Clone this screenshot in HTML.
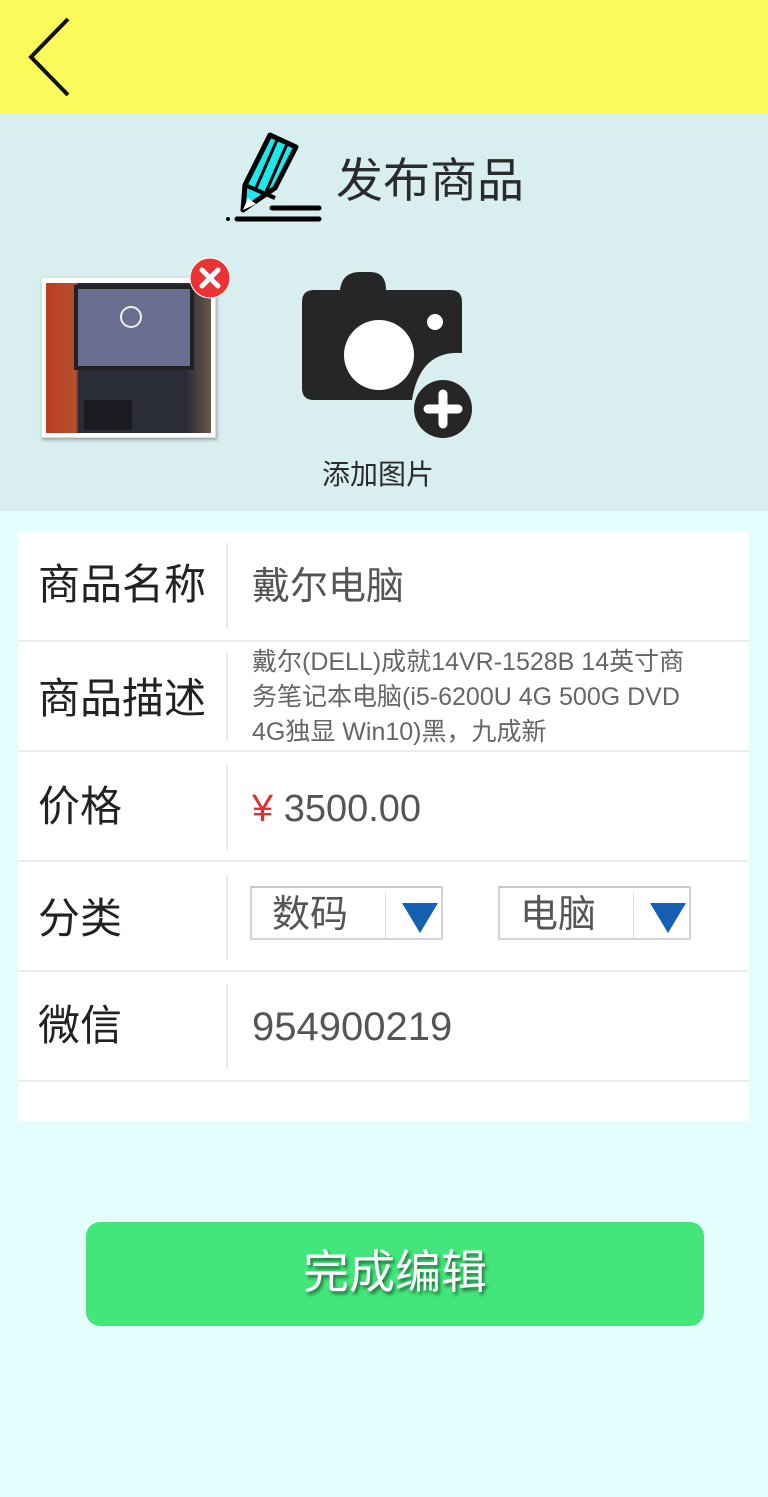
<!DOCTYPE html>
<html><head><meta charset="utf-8"><style>
*{margin:0;padding:0;box-sizing:border-box}
body{width:768px;height:1497px;background:#e4fefe;font-family:"Liberation Sans","Noto Sans CJK SC",sans-serif;position:relative;overflow:hidden}
.top{position:absolute;left:0;top:0;width:768px;height:114px;background:#fafa5a}
.hdr{position:absolute;left:0;top:114px;width:768px;height:397px;background:#d9eeef}
.title{position:absolute;left:336px;top:151px;font-size:47px;color:#2b2b2b;line-height:60px}
.addt{position:absolute;left:322px;top:453px;font-size:28px;color:#2b2b2b}
.form{position:absolute;left:18px;top:531px;width:731px;height:590px;background:#fff}
.row{position:absolute;left:0;width:731px;border-bottom:2px solid #ececec}
.lab{position:absolute;left:20px;font-size:42px;color:#222;line-height:48px}
.sep{position:absolute;left:208px;width:2px;background:#ececec}
.val{position:absolute;left:234px;font-size:38px;color:#555;line-height:44px}
.sel{position:absolute;top:886px;width:193px;height:54px;border:2px solid #d4d4d4;border-top-color:#c8c8c8;background:#fff}
.sel span{position:absolute;left:20px;top:3px;font-size:38px;color:#555;line-height:48px}
.sel i{position:absolute;left:133px;top:4px;width:1px;height:46px;background:#ddd}
.sel b{position:absolute;left:150px;top:15px;width:0;height:0;border-left:18px solid transparent;border-right:18px solid transparent;border-top:30px solid #1560b0}
.btn{position:absolute;left:86px;top:1222px;width:618px;height:104px;background:#42e67a;border-radius:14px;color:#fff;font-size:46px;text-align:center;line-height:100px;text-shadow:2px 3px 3px rgba(0,0,0,.5)}
</style></head><body>
<div class="top"></div>
<svg style="position:absolute;left:26px;top:16px" width="46" height="82"><path d="M42 3 L5 41 L42 79" stroke="#111" stroke-width="4" fill="none"/></svg>
<div class="hdr"></div>
<svg style="position:absolute;left:224px;top:132px" width="100" height="95">
<path d="M46 3 L72 15 L51 56 L19 78 L21 53 Z" fill="#1de8ec" stroke="#000" stroke-width="5" stroke-linejoin="round"/>
<path d="M21 53 L51 66 M21 53 L19 78" stroke="#000" stroke-width="4"/>
<path d="M53 8 L32 56 M63 12 L42 60" stroke="#000" stroke-width="3"/>
<path d="M24 66 L19 78 L32 72 Z" fill="#fff"/>
<path d="M48 76 L95 76 M13 87 L95 87" stroke="#000" stroke-width="5" stroke-linecap="round"/>
<circle cx="4" cy="87" r="2" fill="#000"/></svg>
<div class="title">发布商品</div>
<div style="position:absolute;left:41px;top:277px;width:175px;height:161px;background:#fff;box-shadow:1px 2px 3px rgba(0,0,0,.3);border:1px solid #ddd"></div>
<div style="position:absolute;left:46px;top:283px;width:165px;height:150px;background:linear-gradient(90deg,#c03a20 0%,#b45030 18%,#2a2c38 20%,#2a2c38 85%,#6a5a48 100%)"></div>
<div style="position:absolute;left:74px;top:285px;width:120px;height:85px;background:#6a6e90;border:4px solid #222"></div>
<div style="position:absolute;left:120px;top:306px;width:22px;height:22px;border-radius:50%;border:2px solid #eee"></div>
<div style="position:absolute;left:84px;top:400px;width:48px;height:30px;background:#1a1a20"></div>
<svg style="position:absolute;left:188px;top:256px" width="44" height="44"><circle cx="22" cy="22" r="20" fill="#ea3434" stroke="#fff" stroke-width="1"/><path d="M14 14 L30 30 M30 14 L14 30" stroke="#fff" stroke-width="5" stroke-linecap="round"/></svg>
<svg style="position:absolute;left:300px;top:270px" width="176" height="170">
<path d="M14 20 H40 Q42 2 60 2 H70 Q86 2 86 20 H150 Q162 20 162 32 V83 Q120 80 112 130 H14 Q2 130 2 118 V32 Q2 20 14 20 Z" fill="#262626"/>
<circle cx="79" cy="85" r="35" fill="#fff"/><circle cx="135" cy="52" r="8" fill="#fff"/>
<circle cx="143" cy="139" r="29" fill="#262626"/>
<path d="M143 124 V154 M128 139 H158" stroke="#fff" stroke-width="9" stroke-linecap="round"/></svg>
<div class="addt">添加图片</div>
<div class="form">
<div class="row" style="top:0;height:111px"><div class="lab" style="top:30px">商品名称</div><div class="sep" style="top:12px;height:86px"></div><div class="val" style="top:34px">戴尔电脑</div></div>
<div class="row" style="top:111px;height:110px"><div class="lab" style="top:33px">商品描述</div><div class="sep" style="top:10px;height:90px"></div><div class="val" style="top:3px;font-size:25px;line-height:35px;width:450px;color:#666">戴尔(DELL)成就14VR-1528B 14英寸商务笔记本电脑(i5-6200U 4G 500G DVD 4G独显 Win10)黑，九成新</div></div>
<div class="row" style="top:221px;height:110px"><div class="lab" style="top:31px">价格</div><div class="sep" style="top:12px;height:86px"></div><div class="val" style="top:35px;font-size:38px"><span style="color:#e03030">¥</span> 3500.00</div></div>
<div class="row" style="top:331px;height:110px"><div class="lab" style="top:33px">分类</div><div class="sep" style="top:12px;height:86px"></div></div>
<div class="row" style="top:441px;height:110px"><div class="lab" style="top:30px">微信</div><div class="sep" style="top:12px;height:86px"></div><div class="val" style="top:33px;font-size:40px">954900219</div></div>
</div>
<div class="sel" style="left:250px"><span>数码</span><i></i><b></b></div>
<div class="sel" style="left:498px"><span>电脑</span><i></i><b></b></div>
<div class="btn">完成编辑</div>
</body></html>
